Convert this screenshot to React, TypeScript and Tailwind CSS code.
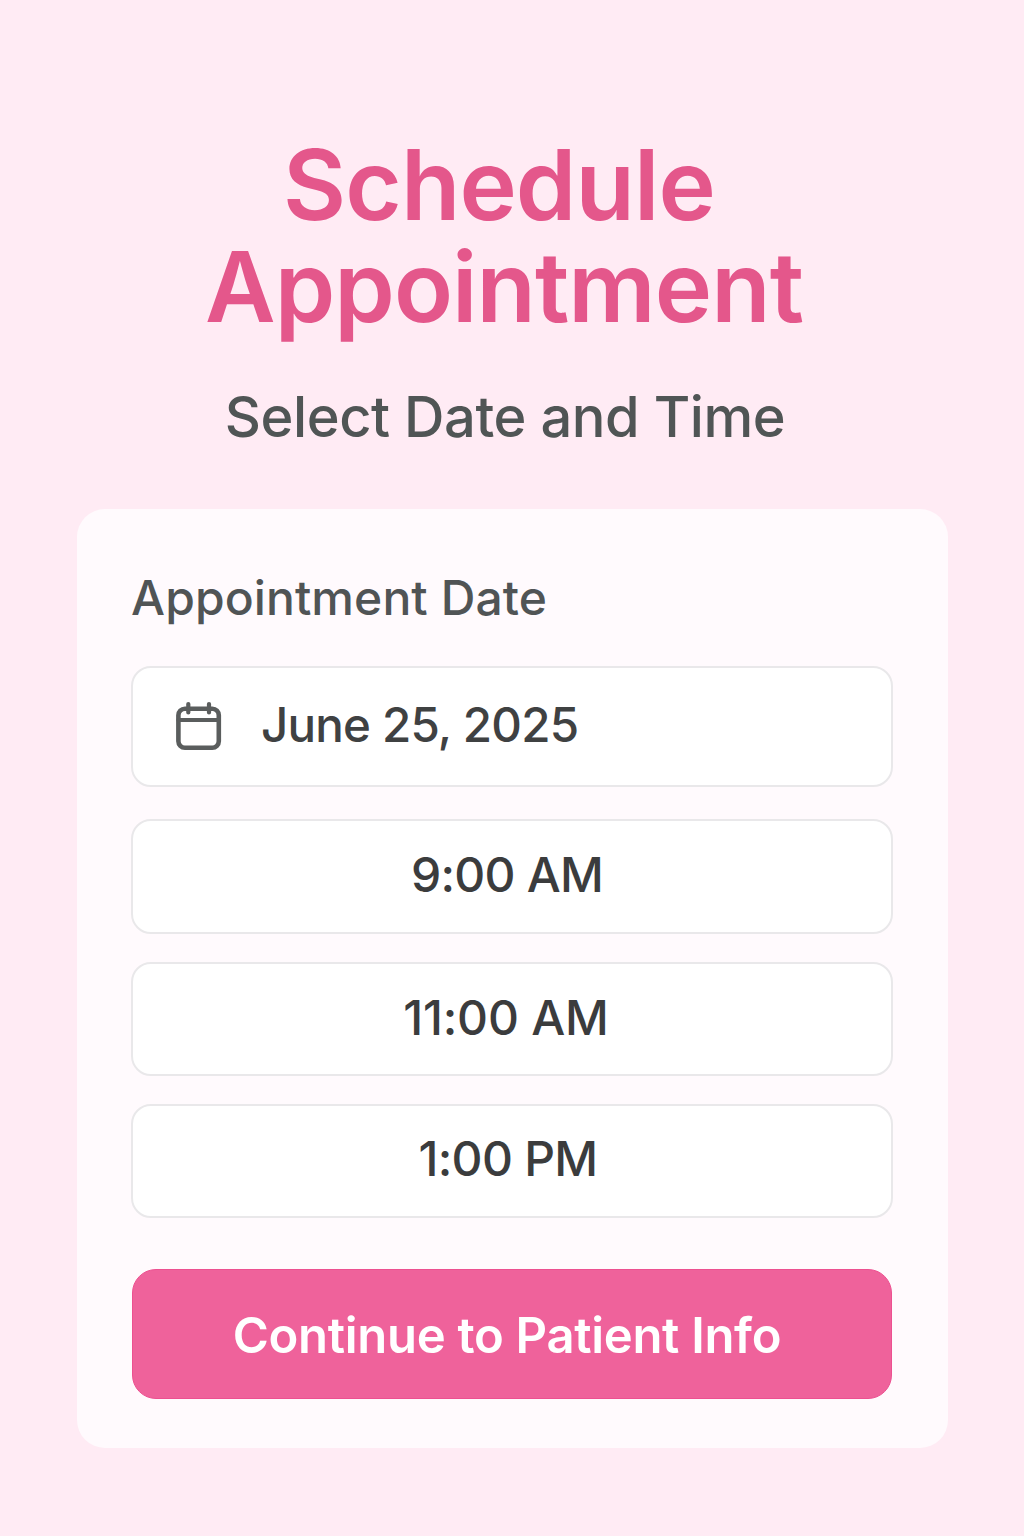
const timeSlots = [
  { label: '9:00 AM', box: 'h-[115px] mb-[28px]', text: 'text-[48px] tracking-[-0.8px] -translate-x-[5px] -translate-y-[2px]' },
  { label: '11:00 AM', box: 'h-[114px] mb-[28px]', text: 'text-[48px] tracking-[-0.2px] -translate-x-[6px] -translate-y-px' },
  { label: '1:00 PM', box: 'h-[114px]', text: 'text-[48px] tracking-[-0.7px] -translate-x-[4px] -translate-y-[2px]' },
];

function CalendarIcon() {
  return (
    <svg width="48" height="52" viewBox="0 0 48 52" fill="none" stroke="#5a5d5d" strokeWidth="4.6" strokeLinecap="round">
      <rect x="3.4" y="7.8" width="40.4" height="39" rx="6.5" />
      <path d="M3.4 19H43.8" strokeWidth="4" />
      <path d="M13.3 3v8.500M34 3v8.500" strokeWidth="4.2" />
    </svg>
  );
}

export default function App() {
  return (
    <div className="w-[1024px] h-[1536px] bg-[#ffebf4] pt-[134px] font-['Inter',sans-serif] whitespace-nowrap">
      <header className="flex flex-col items-center text-center">
        <h1 className="text-[97px] leading-[102px] font-semibold tracking-[-0.9px] text-[#e4578b]">
          <span className="block -translate-x-[13px]">Schedule</span>
          <span className="block -translate-x-[8px]">Appointment</span>
        </h1>
        <p className="mt-[44px] text-[56px] leading-[70px] font-medium tracking-[-0.45px] text-[#505555] -translate-x-[7px]">Select Date and Time</p>
      </header>

      <main className="mt-[57px] ml-[77px] w-[871px] h-[939px] rounded-[28px] bg-[#fffafd] px-[54px] pt-[59px]">
        <label className="block text-[48px] leading-[60px] font-medium tracking-[0.1px] text-[#505455]">Appointment Date</label>
        <button className="mt-[38px] w-[762px] h-[121px] flex items-center rounded-[20px] border-2 border-[#e9e8ea] bg-white pl-[42px]">
          <CalendarIcon />
          <span className="ml-[38px] text-[47.5px] font-medium tracking-[-0.8px] text-[#3f4142] -translate-y-[2px]">June 25, 2025</span>
        </button>
        <div className="mt-[32px] flex flex-col">
          {timeSlots.map(slot => (
            <button key={slot.label} className={`w-[762px] flex items-center justify-center rounded-[20px] border-2 border-[#e9e8ea] bg-white font-medium text-[#3b3c3d] ${slot.box}`}>
              <span className={slot.text}>{slot.label}</span>
            </button>
          ))}
        </div>
        <button className="mt-[51px] ml-px w-[760px] h-[130px] rounded-[24px] border border-[#ed5090] bg-[#ef629b] text-[49px] font-semibold tracking-[-0.3px] text-white">
          <span className="block -translate-x-[5px] translate-y-[2px]">Continue to Patient Info</span>
        </button>
      </main>
    </div>
  );
}
